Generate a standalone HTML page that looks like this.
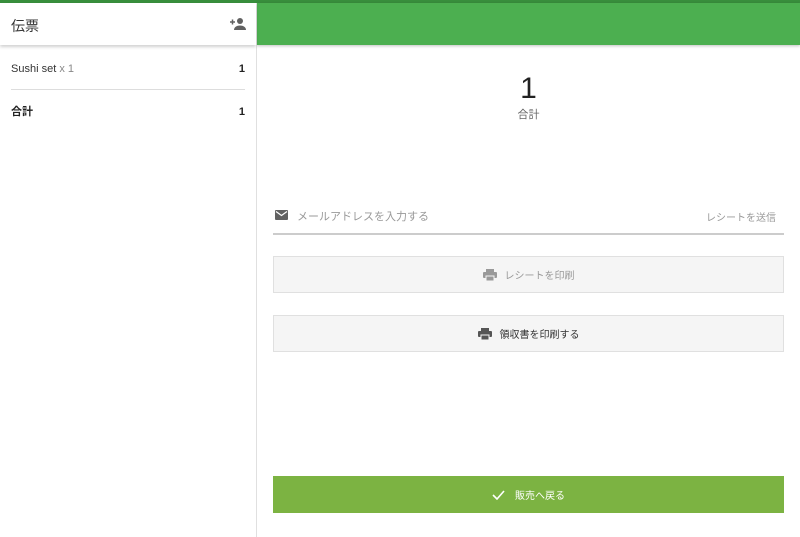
<!DOCTYPE html>
<html><head><meta charset="utf-8"><style>
*{margin:0;padding:0;box-sizing:border-box}
body{width:800px;height:537px;overflow:hidden;background:#fff;font-family:"Liberation Sans","Noto Sans CJK JP",sans-serif;position:relative;color:#222}
.topline{position:absolute;left:0;top:0;width:800px;height:3px;background:#388e3c}
.band{position:absolute;left:257px;top:3px;width:543px;height:42px;background:#4caf50;box-shadow:0 1px 3px rgba(0,0,0,.25)}
.left{position:absolute;left:0;top:3px;width:257px;height:534px;background:#fff;border-right:1px solid #e0e0e0}
.lh{height:42px;box-shadow:0 2px 3px rgba(0,0,0,.18);position:relative;font-size:14px;color:#333}
.lh span{position:absolute;left:11px;top:13px}
.row{position:absolute;left:11px;right:11px;font-size:11px;line-height:16px;height:16px}
.row .r{position:absolute;right:0;top:0;font-weight:bold;line-height:16px}
.main{position:absolute;left:273px;width:511px}
.btn{position:absolute;left:273px;width:511px;height:37px;background:#f5f5f5;border:1px solid #e0e0e0;font-size:10px;display:flex;align-items:center;justify-content:center;gap:8px}
</style></head><body>
<div class="topline"></div>
<div class="band"></div>
<div class="left">
 <div class="lh"><span>伝票</span>
  <svg style="position:absolute;left:229px;top:14px" width="18" height="14" viewBox="0 0 18 14"><circle cx="11" cy="4" r="3" fill="#616161"/><path d="M5 13c0-3 3-4.5 6-4.5s6 1.5 6 4.5z" fill="#616161"/><path d="M1 5h5M3.5 2.5v5" stroke="#616161" stroke-width="1.5"/></svg>
 </div>
 <div class="row" style="top:58px;color:#333">Sushi set <span style="color:#888">x 1</span><span class="r" style="color:#222">1</span></div>
 <div style="position:absolute;left:11px;right:11px;top:86px;height:1px;background:#ddd"></div>
 <div class="row" style="top:101px;font-weight:bold">合計<span class="r">1</span></div>
</div>
<div class="main" style="top:72px;text-align:center;font-size:30px;color:#222">1</div>
<div class="main" style="top:106px;text-align:center;font-size:11px;color:#666">合計</div>
<svg style="position:absolute;left:275px;top:210px" width="13" height="10" viewBox="0 0 13 10"><rect width="13" height="10" rx="1" fill="#616161"/><path d="M1 1.5l5.5 4 5.5-4" stroke="#fff" stroke-width="1.2" fill="none"/></svg>
<div style="position:absolute;left:297px;top:208px;font-size:11px;color:#999">メールアドレスを入力する</div>
<div style="position:absolute;right:24px;top:209px;font-size:10px;color:#999">レシートを送信</div>
<div style="position:absolute;left:273px;top:233px;width:511px;height:2px;background:#ccc"></div>
<div class="btn" style="top:256px;color:#999"><svg width="14" height="12" viewBox="0 0 14 12"><rect x="3" y="0" width="8" height="3" fill="#999"/><rect x="0" y="3" width="14" height="6" rx="1" fill="#999"/><rect x="3" y="7" width="8" height="5" fill="#999" stroke="#f5f5f5" stroke-width="1"/></svg>レシートを印刷</div>
<div class="btn" style="top:315px;color:#333"><svg width="14" height="12" viewBox="0 0 14 12"><rect x="3" y="0" width="8" height="3" fill="#555"/><rect x="0" y="3" width="14" height="6" rx="1" fill="#555"/><rect x="3" y="7" width="8" height="5" fill="#555" stroke="#f5f5f5" stroke-width="1"/></svg>領収書を印刷する</div>
<div style="position:absolute;left:273px;top:476px;width:511px;height:37px;background:#7cb342;color:#fff;font-size:10px;display:flex;align-items:center;justify-content:center;gap:10px"><svg width="13" height="10" viewBox="0 0 13 10"><path d="M1 5l4 4 7-8" stroke="#fff" stroke-width="1.6" fill="none"/></svg>販売へ戻る</div>
</body></html>
